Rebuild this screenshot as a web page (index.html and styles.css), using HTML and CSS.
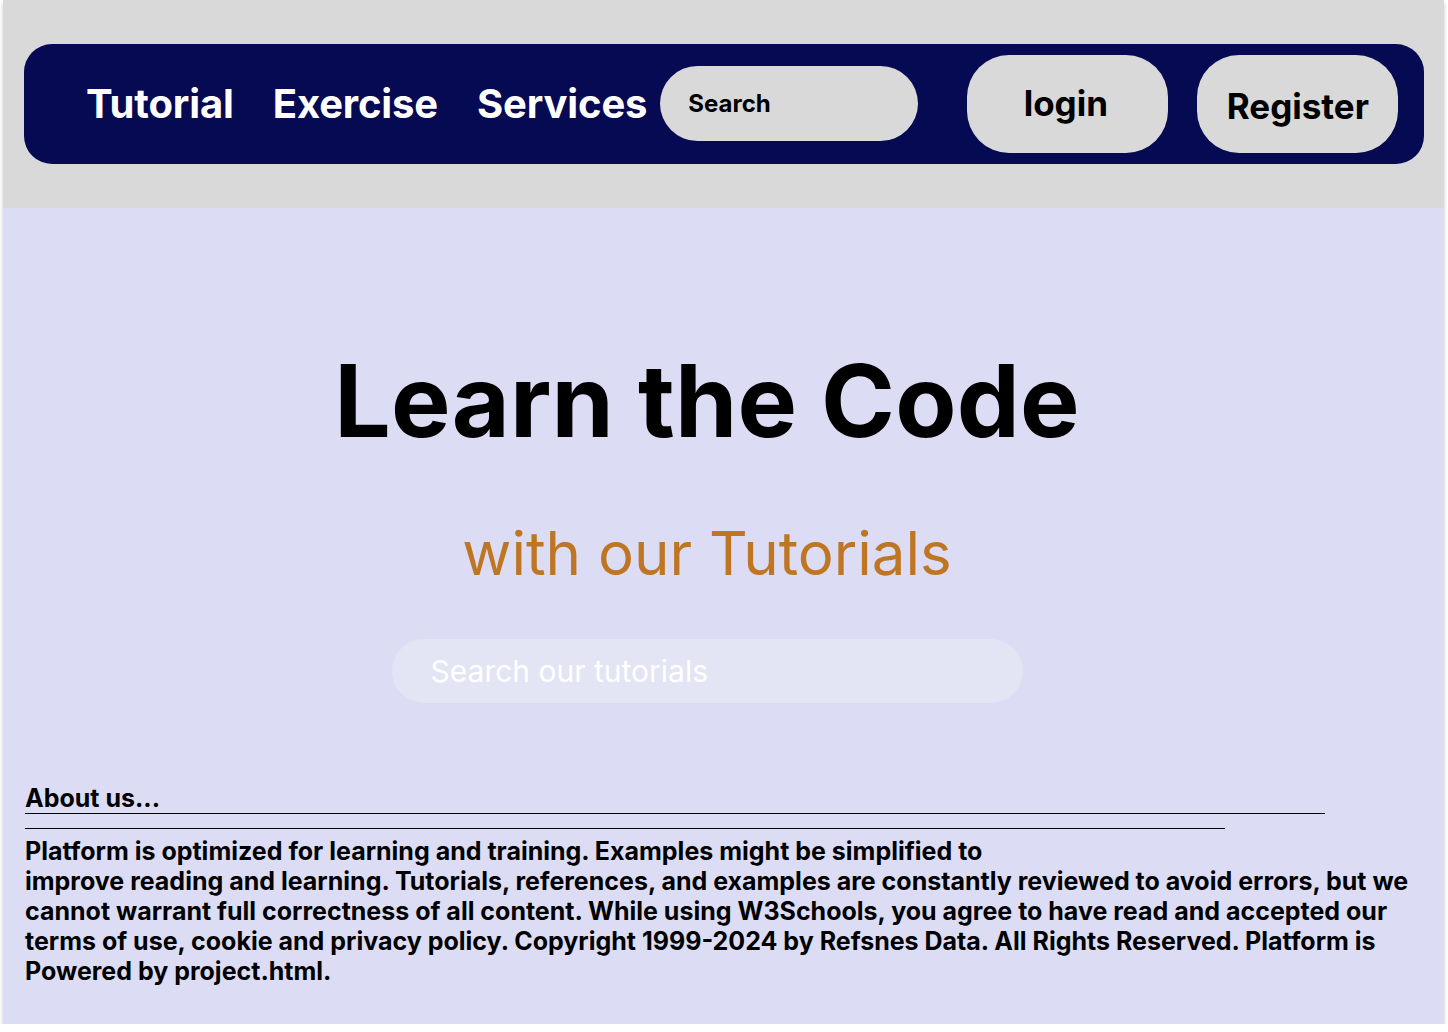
FILE: index.html
```html
<!DOCTYPE html>
<html lang="en">
<head>
<meta charset="utf-8">
<title>Learn the Code</title>
<link rel="stylesheet" href="styles.css">
</head>
<body>
<div class="page">
  <header class="header">
    <nav class="nav">
      <a class="nav-link" href="#">Tutorial</a>
      <a class="nav-link" href="#">Exercise</a>
      <a class="nav-link" href="#">Services</a>
      <div class="nav-search">Search</div>
      <button class="btn btn-login">login</button>
      <button class="btn btn-register">Register</button>
    </nav>
  </header>
  <main class="hero">
    <h1 class="hero-title">Learn the Code</h1>
    <p class="hero-sub">with our Tutorials</p>
    <div class="hero-search">Search our tutorials</div>
  </main>
  <footer class="about">
    <h2 class="about-title">About us...</h2>
    <hr class="rule rule-long">
    <hr class="rule rule-short">
    <p class="about-text">Platform is optimized for learning and training. Examples might be simplified to<br>improve reading and learning. Tutorials, references, and examples are constantly reviewed to avoid errors, but we cannot warrant full correctness of all content. While using W3Schools, you agree to have read and accepted our terms of use, cookie and privacy policy. Copyright 1999-2024 by Refsnes Data. All Rights Reserved. Platform is Powered by project.html.</p>
  </footer>
</div>
</body>
</html>
```
FILE: styles.css
```css
* { box-sizing: border-box; }
html, body { margin: 0; padding: 0; background: #ffffff; }
body { font-family: Inter, "Noto Sans", sans-serif; }

.page {
  width: 1441px;
  height: 1024px;
  margin-left: 3px;
  background: #dcdcf4;
  box-shadow: 0 3px 4px rgba(0, 0, 0, 0.22);
  overflow: hidden;
}

.header {
  height: 208px;
  background: #d9d9d9;
  padding: 44px 20px 0 21px;
}

.nav {
  height: 120px;
  background: #060a52;
  border-radius: 28px;
  display: flex;
  align-items: center;
  padding-left: 62px;
}

.nav-link {
  color: #ffffff;
  text-decoration: none;
  font-size: 40px;
  font-weight: 700;
  line-height: 48px;
  margin-right: 39px;
  letter-spacing: -0.15px;
}
.nav-link:nth-child(3) { margin-right: 13px; }

.nav-search {
  width: 258px;
  height: 75px;
  margin-top: -2px;
  border-radius: 38px;
  background: #d9d9d9;
  color: #000000;
  font-size: 24px;
  font-weight: 700;
  display: flex;
  align-items: center;
  padding-left: 28px;
}

.btn {
  width: 201px;
  height: 98px;
  border: none;
  border-radius: 42px;
  background: #d9d9d9;
  color: #000000;
  font-family: Inter, "Noto Sans", sans-serif;
  font-size: 35px;
  font-weight: 700;
  padding: 0;
}
.btn-login { margin-left: 49px; padding-bottom: 2px; padding-right: 4px; }
.btn-register { margin-left: 29px; padding-top: 4px; }

.hero {
  padding: 133px 33px 0 0;
  text-align: center;
}
.hero-title {
  margin: 0;
  font-size: 100px;
  line-height: 120px;
  font-weight: 700;
  letter-spacing: 0.2px;
  color: #000000;
}
.hero-sub {
  margin: 56px 0 0;
  font-size: 60px;
  line-height: 72px;
  font-weight: 400;
  color: #bf7622;
}
.hero-search {
  width: 631px;
  height: 64px;
  margin: 50px auto 0;
  border-radius: 32px;
  background: #e3e4f4;
  color: #ffffff;
  font-size: 30px;
  font-weight: 400;
  text-align: left;
  display: flex;
  align-items: center;
  padding-left: 39px;
}

.about {
  padding: 80px 0 0 22px;
}
.about-title {
  margin: 0;
  font-size: 25px;
  line-height: 30px;
  font-weight: 700;
  color: #000000;
}
.rule {
  margin: 0;
  border: none;
  border-top: 1px solid #000000;
  height: 0;
}
.rule-long { width: 1300px; }
.rule-short { width: 1200px; margin-top: 14px; }
.about-text {
  margin: 7px 0 0;
  width: 1395px;
  font-size: 25px;
  line-height: 30px;
  font-weight: 700;
  color: #000000;
}
```
